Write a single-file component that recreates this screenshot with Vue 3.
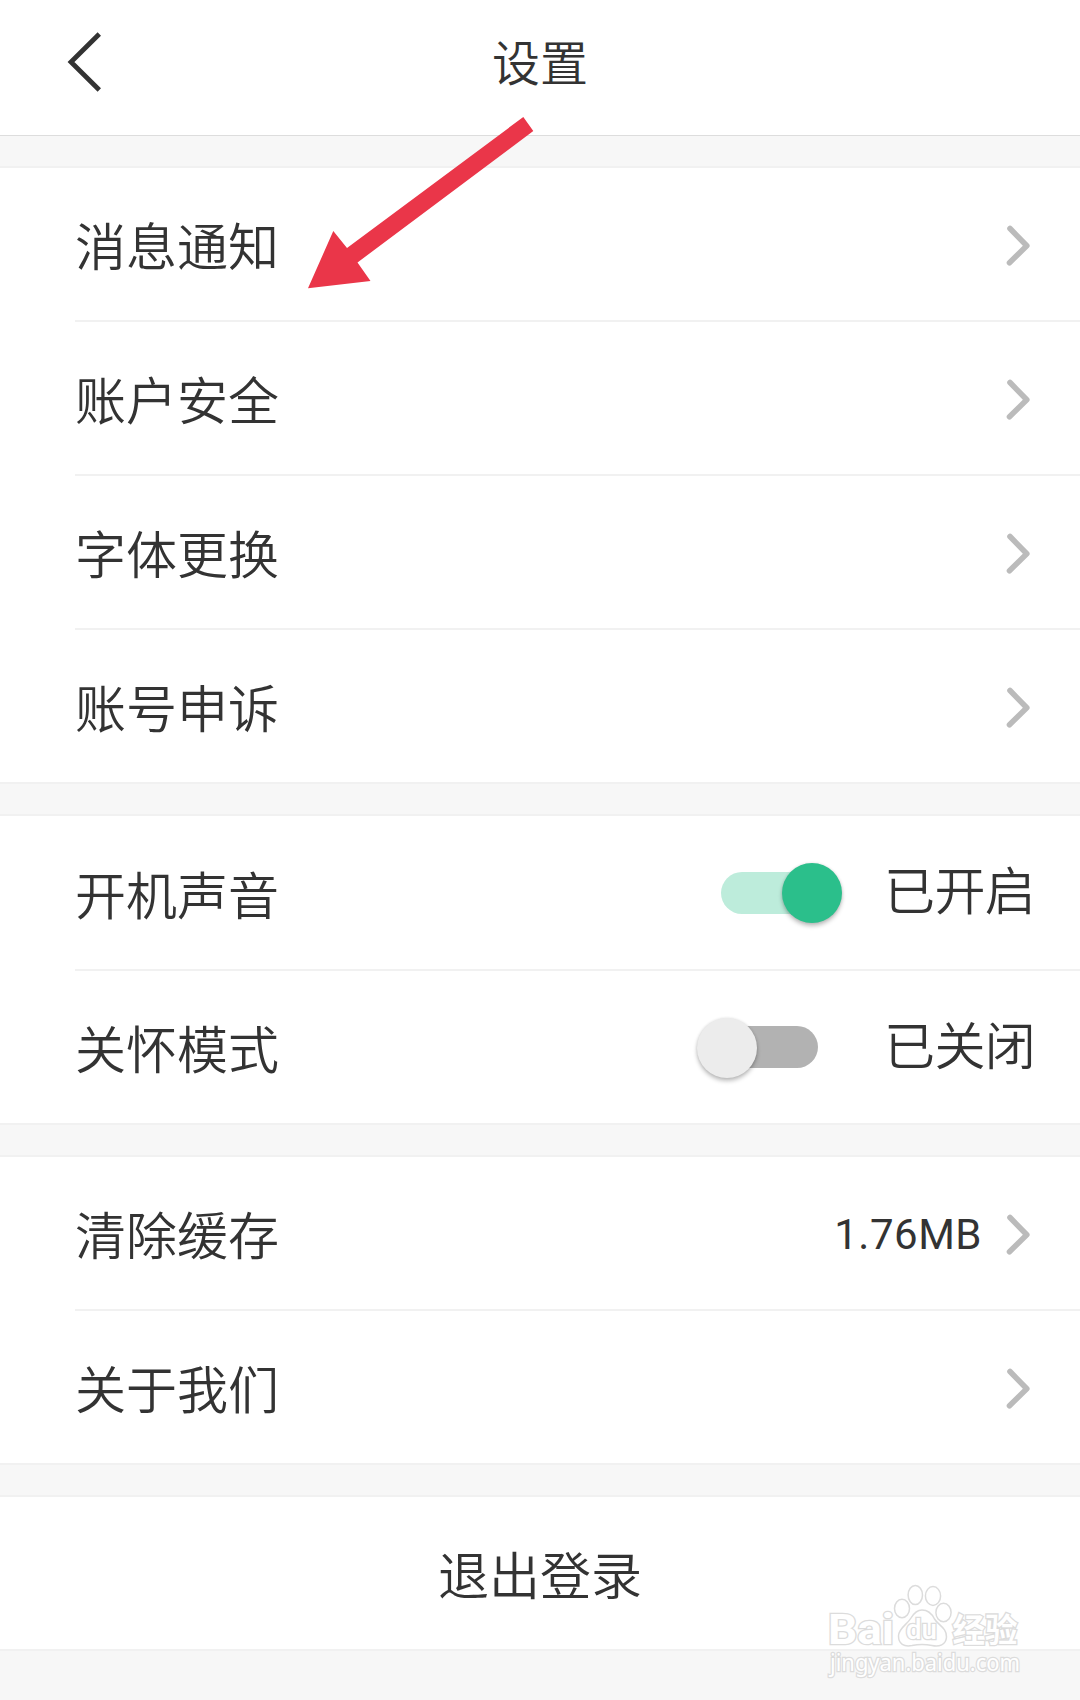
<script setup>
const groups = [
  {
    id: 'account',
    rows: [
      { label: '消息通知', arrow: true },
      { label: '账户安全', arrow: true },
      { label: '字体更换', arrow: true },
      { label: '账号申诉', arrow: true },
    ],
  },
  {
    id: 'mode',
    rows: [
      { label: '开机声音', toggle: true, on: true, status: '已开启' },
      { label: '关怀模式', toggle: true, on: false, status: '已关闭' },
    ],
  },
  {
    id: 'about',
    rows: [
      { label: '清除缓存', value: '1.76MB', arrow: true },
      { label: '关于我们', arrow: true },
    ],
  },
]
</script>

<template>
  <main class="page">
    <header class="header">
      <svg class="back" width="36" height="62" viewBox="0 0 36 62">
        <path d="M32.3 3 L4 31 L32.3 59" fill="none" stroke="#333" stroke-width="4.8" />
      </svg>
      <h1 class="title">设置</h1>
    </header>

    <section v-for="g in groups" :key="g.id" class="group" :class="g.id">
      <div v-for="r in g.rows" :key="r.label" class="row">
        <span class="label">{{ r.label }}</span>
        <span v-if="r.toggle" class="switch" :class="{ on: r.on }"><i class="knob"></i></span>
        <span v-if="r.status" class="status">{{ r.status }}</span>
        <span v-if="r.value" class="value">{{ r.value }}</span>
        <svg v-if="r.arrow" class="chevron" width="24" height="42" viewBox="0 0 24 42">
          <path d="M4 3.5 L20.8 20.8 L3.5 37.7" fill="none" stroke="#bbb" stroke-width="5.6" stroke-linecap="round" stroke-linejoin="round" />
        </svg>
      </div>
    </section>

    <section class="group">
      <button class="row logout">退出登录</button>
    </section>

    <svg class="pointer" width="230" height="176" viewBox="0 0 230 176">
      <path d="M218.3 1 L228.3 15 L52.5 146.5 L65.5 165 L3 172.3 L28.3 115 L42 132 Z" fill="#ea3649" />
    </svg>

    <svg class="watermark" width="210" height="100" viewBox="0 0 210 100">
      <g class="ink">
        <text x="8" y="64" class="brand" textLength="66" lengthAdjust="spacingAndGlyphs">Bai</text>
        <ellipse cx="82" cy="28.5" rx="7.5" ry="9.2" />
        <ellipse cx="95.3" cy="15" rx="7.2" ry="9.6" />
        <ellipse cx="113" cy="16" rx="7.6" ry="9.4" />
        <ellipse cx="123.5" cy="32.5" rx="7.6" ry="9.2" />
        <path d="M102 30 C109 30 112 34 114.5 39 C118 45 127 48 126.5 57 C126 65 119 67 112 65.5 C105 64 99 64 92 65.5 C84 67 78.5 64 78.5 56 C78.5 48 87 45 91 38 C94 33 97 30 102 30 Z" />
        <text x="86" y="59" class="du" textLength="31" lengthAdjust="spacingAndGlyphs">du</text>
        <text x="132.5" y="61.5" class="cn" textLength="65" lengthAdjust="spacingAndGlyphs">经验</text>
        <text x="10" y="90.5" class="url" textLength="190" lengthAdjust="spacingAndGlyphs">jingyan.baidu.com</text>
      </g>
    </svg>
  </main>
</template>

<style>
body {
  background: #f7f7f7;
}
</style>

<style scoped>
.page {
  position: relative;
  width: 1080px;
  height: 1700px;
  overflow: hidden;
  background: #f7f7f7;
  color: #333;
  font-family: Roboto, "Noto Sans CJK SC", sans-serif;
}
.header {
  box-sizing: border-box;
  height: 136px;
  display: grid;
  grid-template-columns: 140px 1fr 140px;
  background: #fff;
  border-bottom: 1px solid #ddd;
}
.back {
  margin: 31px 0 0 67px;
}
.title {
  margin: 0;
  padding-top: 29px;
  font-size: 48px;
  line-height: 72px;
  font-weight: 350;
  text-align: center;
}
.group {
  margin-top: 30px;
  background: #fff;
  border-top: 2px solid #f1f1f1;
  border-bottom: 2px solid #f1f1f1;
}
.row {
  box-sizing: content-box;
  height: 152px;
  margin-left: 75px;
  padding-right: 50px;
  display: flex;
  align-items: center;
}
.row + .row {
  border-top: 2px solid #f1f1f1;
}
.mode .row:first-child {
  height: 153px;
}
.label {
  flex: 1;
  padding-top: 10px;
  font-size: 51px;
  line-height: 76px;
  font-weight: 350;
}
.chevron {
  margin-top: 4px;
}
.value {
  margin-top: 4px;
  margin-right: 24px;
  font-size: 42px;
  line-height: 60px;
  font-weight: 370;
  letter-spacing: 0.5px;
}
.status {
  width: 154px;
  margin-left: 42px;
  margin-right: -8px;
  margin-top: 1px;
  font-size: 51px;
  line-height: 74px;
  font-weight: 350;
  letter-spacing: -0.6px;
  white-space: nowrap;
}
.switch {
  position: relative;
  width: 97px;
  height: 42px;
  margin-right: 24px;
  border-radius: 21px;
  background: #b2b2b2;
}
.switch.on {
  background: #bdecdb;
}
.knob {
  position: absolute;
  top: -8.5px;
  left: -24px;
  width: 60px;
  height: 60px;
  border-radius: 50%;
  background: #ececec;
  box-shadow: 0 3px 4px rgba(0, 0, 0, 0.25), 0 0 3px rgba(0, 0, 0, 0.1);
}
.on .knob {
  left: 60.5px;
  background: #2bbf8b;
}
.logout {
  width: 100%;
  margin: 0;
  padding: 10px 0 0;
  height: 142px;
  border: 0;
  justify-content: center;
  background: none;
  color: inherit;
  font: 350 51px/76px Roboto, "Noto Sans CJK SC", sans-serif;
}
.pointer {
  position: absolute;
  left: 305px;
  top: 116px;
}
.watermark {
  position: absolute;
  left: 820px;
  top: 1580px;
}
.ink {
  fill: #fff;
  stroke: #dcdcdc;
  stroke-width: 1.5;
}
.ink text {
  paint-order: stroke;
  stroke-width: 2.6;
}
.brand {
  font: 700 42px Roboto, sans-serif;
}
.du {
  font: 500 27px Roboto, sans-serif;
}
.cn {
  font: 700 33px "Noto Sans CJK SC", sans-serif;
}
.url {
  font: 400 23px "Noto Sans", sans-serif;
}
</style>
